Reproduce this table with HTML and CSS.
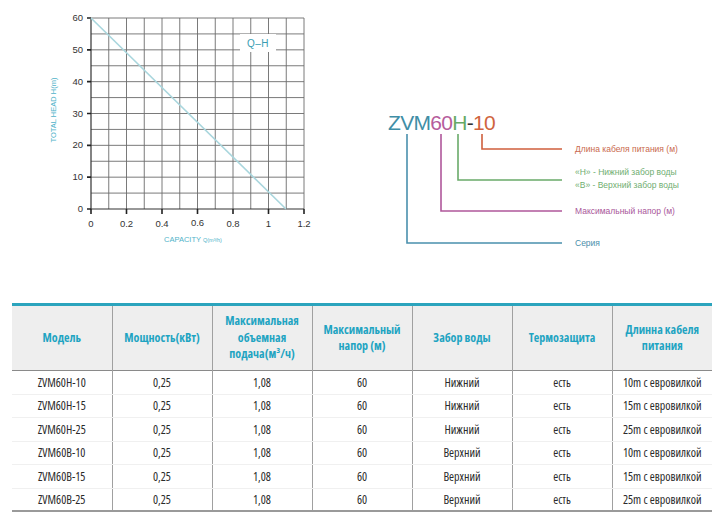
FILE: index.html
```html
<!DOCTYPE html>
<html lang="ru">
<head>
<meta charset="utf-8">
<link rel="stylesheet" href="styles.css">
</head>
<body>
<div class="top">
  <svg class="chart" viewBox="30 0 300 290" width="300" height="290">
    <path class="grid" d="M108.75 18V209M126.5 18V209M144.25 18V209M162 18V209M179.75 18V209M197.5 18V209M215.25 18V209M233 18V209M250.75 18V209M268.5 18V209M286.25 18V209M304 18V209M91 193.08H304M91 177.17H304M91 161.25H304M91 145.33H304M91 129.42H304M91 113.5H304M91 97.58H304M91 81.67H304M91 65.75H304M91 49.83H304M91 33.92H304M91 18H304"/>
    <path class="axis" d="M91 18V209H304"/>
    <path class="ticks" d="M91 209V214M126.5 209V214M162 209V214M197.5 209V214M233 209V214M268.5 209V214M304 209V214M87 18H91M87 49.83H91M87 81.67H91M87 113.5H91M87 145.33H91M87 177.17H91M87 209H91"/>
    <line class="curve" x1="91" y1="18" x2="286" y2="209"/>
    <rect x="240" y="34" width="36" height="18" fill="#fff"/>
    <text class="qh" x="258" y="46.5">Q–H</text>
    <g class="ylab">
      <text x="83" y="21">60</text>
      <text x="83" y="52.8">50</text>
      <text x="83" y="84.7">40</text>
      <text x="83" y="116.5">30</text>
      <text x="83" y="148.3">20</text>
      <text x="83" y="180.2">10</text>
      <text x="83" y="212">0</text>
    </g>
    <g class="xlab">
      <text x="91" y="227">0</text>
      <text x="126.5" y="227">0.2</text>
      <text x="162" y="227">0.4</text>
      <text x="197.5" y="226">0.6</text>
      <text x="233" y="227">0.8</text>
      <text x="268.5" y="227">1</text>
      <text x="304" y="227">1.2</text>
    </g>
    <text class="atitle" x="193" y="241.5">CAPACITY <tspan class="small">Q(m³/h)</tspan></text>
    <text class="atitle" transform="translate(56 110) rotate(-90)" x="0" y="0">TOTAL HEAD H(m)</text>
  </svg>
  <svg class="code" viewBox="370 0 350 290" width="350" height="290">
    <text class="model" x="388" y="130"><tspan fill="#3f8ea6">ZVM</tspan><tspan fill="#b65c9c">60</tspan><tspan fill="#66a966">H</tspan><tspan fill="#333">-</tspan><tspan fill="#d0643e">10</tspan></text>
    <path d="M407 134V243H562" stroke="#4a90ad" class="lead"/>
    <path d="M441 134V211H562" stroke="#b0579b" class="lead"/>
    <path d="M458 134V180H562" stroke="#6aab6a" class="lead"/>
    <path d="M482 134V149H562" stroke="#cf5f3d" class="lead"/>
    <text class="note" x="575" y="152" fill="#c96a4e">Длина кабеля питания (м)</text>
    <text class="note" x="575" y="175" fill="#6fae70">«Н» - Нижний забор воды</text>
    <text class="note" x="575" y="188" fill="#6fae70">«В» - Верхний забор воды</text>
    <text class="note" x="575" y="214" fill="#a9569a">Максимальный напор (м)</text>
    <text class="note" x="575" y="246" fill="#4a8fab">Серия</text>
  </svg>
</div>
<table class="spec">
  <thead>
    <tr>
      <th>Модель</th>
      <th>Мощность(кВт)</th>
      <th>Максимальная<br>объемная<br>подача(м³/ч)</th>
      <th>Максимальный<br>напор (м)</th>
      <th>Забор воды</th>
      <th>Термозащита</th>
      <th>Длинна кабеля<br>питания</th>
    </tr>
  </thead>
  <tbody>
    <tr><td>ZVM60H-10</td><td>0,25</td><td>1,08</td><td>60</td><td>Нижний</td><td>есть</td><td>10m с евровилкой</td></tr>
    <tr><td>ZVM60H-15</td><td>0,25</td><td>1,08</td><td>60</td><td>Нижний</td><td>есть</td><td>15m с евровилкой</td></tr>
    <tr><td>ZVM60H-25</td><td>0,25</td><td>1,08</td><td>60</td><td>Нижний</td><td>есть</td><td>25m с евровилкой</td></tr>
    <tr><td>ZVM60B-10</td><td>0,25</td><td>1,08</td><td>60</td><td>Верхний</td><td>есть</td><td>10m с евровилкой</td></tr>
    <tr><td>ZVM60B-15</td><td>0,25</td><td>1,08</td><td>60</td><td>Верхний</td><td>есть</td><td>15m с евровилкой</td></tr>
    <tr><td>ZVM60B-25</td><td>0,25</td><td>1,08</td><td>60</td><td>Верхний</td><td>есть</td><td>25m с евровилкой</td></tr>
  </tbody>
</table>
</body>
</html>
```
FILE: styles.css
```css
html, body {
  margin: 0;
  padding: 0;
  background: #fff;
}
body {
  width: 720px;
  height: 521px;
  overflow: hidden;
  font-family: "Liberation Sans", Arial, sans-serif;
}
.top {
  display: flex;
  gap: 40px;
  padding-left: 30px;
  height: 290px;
}
.chart, .code {
  display: block;
}
.grid {
  stroke: #6b6b6b;
  stroke-width: 0.9;
  fill: none;
}
.axis {
  stroke: #333;
  stroke-width: 1.2;
  fill: none;
}
.ticks {
  stroke: #222;
  stroke-width: 1.6;
  fill: none;
}
.curve {
  stroke: #a9d6dd;
  stroke-width: 1.6;
}
.qh {
  font-size: 10px;
  fill: #3a9db2;
  text-anchor: middle;
  letter-spacing: 0.5px;
}
.ylab text {
  font-size: 9.5px;
  fill: #333;
  text-anchor: end;
}
.xlab text {
  font-size: 9.5px;
  fill: #333;
  text-anchor: middle;
}
.atitle {
  font-size: 7.5px;
  fill: #4fb3c9;
  text-anchor: middle;
}
.atitle .small {
  font-size: 5.5px;
}
.model {
  font-size: 21px;
  letter-spacing: -0.7px;
  font-family: "Liberation Sans", Arial, sans-serif;
}
.lead {
  fill: none;
  stroke-width: 1.6;
}
.note {
  font-size: 8.5px;
}
.spec {
  margin: 13px 0 0 12px;
  width: 700px;
  border-collapse: collapse;
  table-layout: fixed;
  font-family: "Open Sans", "DejaVu Sans Condensed", sans-serif;
  font-stretch: 75%;
}
.spec thead tr {
  background: #eeeeee;
  border-top: 3px solid #2ba4bd;
  border-bottom: 1px solid #8a8a8a;
}
.spec th {
  height: 64px;
  padding: 0 2px;
  font-size: 12px;
  font-stretch: 82%;
  line-height: 16.4px;
  font-weight: bold;
  color: #1fa4c2;
}
.spec th, .spec td {
  border-left: 1px solid #a0a0a0;
  text-align: center;
}
.spec th:first-child, .spec td:first-child {
  border-left: none;
}
.spec td {
  height: 22.5px;
  padding: 0;
  font-size: 12px;
  color: #2a2a2a;
  border-bottom: 1px solid #f0f0f0;
}
.spec tbody tr:last-child td {
  border-bottom: 2px solid #9a9a9a;
  height: 21.5px;
}
```
